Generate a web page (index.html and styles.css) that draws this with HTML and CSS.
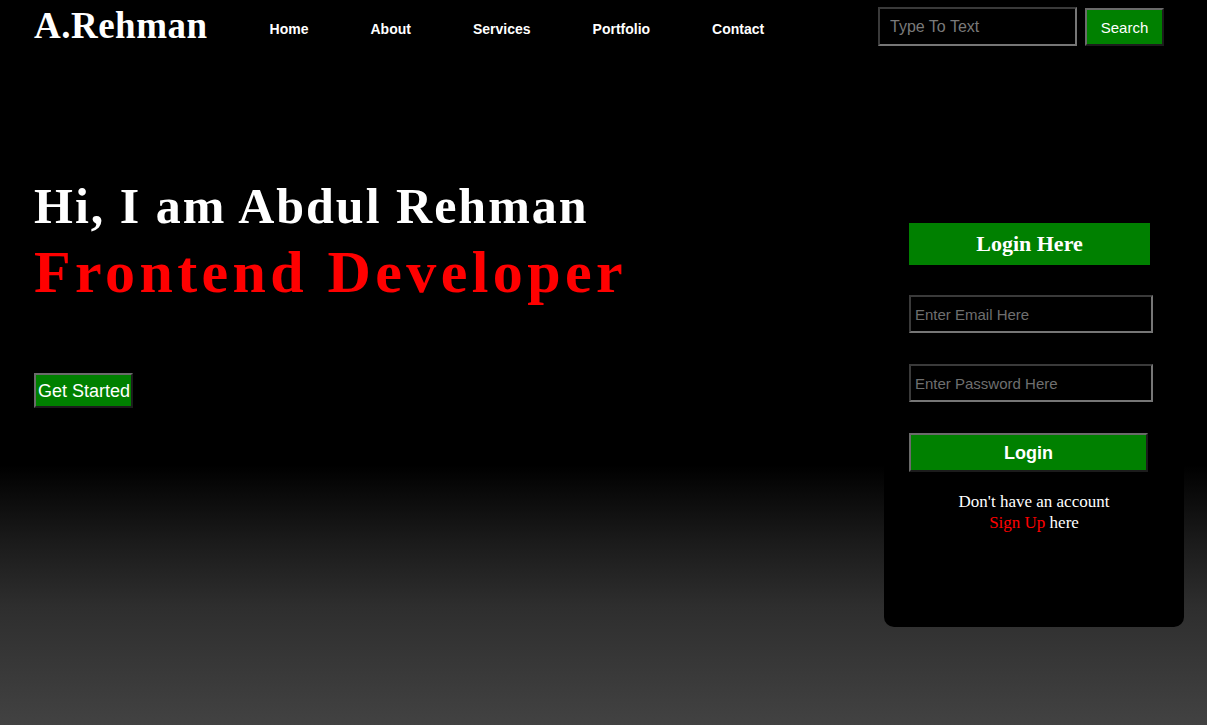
FILE: index.html
```html
<!DOCTYPE html>
<html lang="en">
<head>
<meta charset="utf-8">
<title>A.Rehman</title>
<link rel="stylesheet" href="styles.css">
</head>
<body>
<header class="topbar">
  <div class="logo">A.Rehman</div>
  <ul class="menu">
    <li><a href="#">Home</a></li>
    <li><a href="#">About</a></li>
    <li><a href="#">Services</a></li>
    <li><a href="#">Portfolio</a></li>
    <li><a href="#">Contact</a></li>
  </ul>
  <form class="search">
    <input class="search-input" type="text" placeholder="Type To Text">
    <button class="search-btn" type="button">Search</button>
  </form>
</header>
<main class="main">
  <section class="hero">
    <h1 class="hero-title">Hi, I am Abdul Rehman</h1>
    <h2 class="hero-sub">Frontend Developer</h2>
    <button class="start-btn" type="button">Get Started</button>
  </section>
  <aside class="card">
    <div class="card-title">Login Here</div>
    <input class="field field-email" type="email" placeholder="Enter Email Here">
    <input class="field field-pass" type="password" placeholder="Enter Password Here">
    <button class="login-btn" type="button">Login</button>
    <p class="signup">Don't have an account<br><a href="#" class="signup-link">Sign Up</a> here</p>
  </aside>
</main>
</body>
</html>
```
FILE: styles.css
```css
* { box-sizing: border-box; }

html, body { margin: 0; padding: 0; }

body {
  min-height: 725px;
  background: linear-gradient(to bottom, #000 0px, #000 465px, #1a1a1a 540px, #2e2e2e 607px, #424242 725px);
  background-color: #000;
  font-family: "Liberation Serif", "Times New Roman", serif;
  color: #fff;
  overflow: hidden;
}

.topbar {
  display: flex;
  align-items: center;
  height: 53px;
  padding: 0 43px 0 34px;
}

.logo {
  font-family: "Liberation Serif", "Times New Roman", serif;
  font-weight: bold;
  font-size: 37px;
  letter-spacing: 0.5px;
  color: #fff;
  line-height: 1;
  margin-top: -2px;
}

.menu {
  display: flex;
  gap: 62px;
  list-style: none;
  margin: 5px 0 0 62px;
  padding: 0;
}

.menu a {
  font-family: "Liberation Sans", Arial, sans-serif;
  font-weight: bold;
  font-size: 14px;
  color: #fff;
  text-decoration: none;
}

.search {
  margin-left: auto;
  display: flex;
  align-items: flex-start;
  gap: 8px;
}

.search-input {
  width: 199px;
  height: 39px;
  background: #000;
  border: 2px solid;
  border-color: #3a3a3a #767676 #767676 #3a3a3a;
  padding: 0 10px;
  font-family: "Liberation Sans", Arial, sans-serif;
  font-size: 16px;
  color: #fff;
  outline: none;
}

.search-input::placeholder { color: #7a7a7a; opacity: 1; }

.search-btn {
  margin-top: 1px;
  width: 79px;
  height: 38px;
  background: #008000;
  color: #fff;
  border: 2px solid;
  border-color: #6a6a6a #1c1c1c #1c1c1c #6a6a6a;
  font-family: "Liberation Sans", Arial, sans-serif;
  font-size: 15px;
  padding: 0;
}

.field::placeholder { color: #6f6f6f; opacity: 1; }

.main {
  display: flex;
  justify-content: space-between;
  align-items: flex-start;
  padding: 0 23px 0 34px;
}

.hero { padding-top: 128px; }

.hero-title {
  margin: 0;
  font-family: "Liberation Serif", "Times New Roman", serif;
  font-weight: bold;
  font-size: 50px;
  line-height: 50px;
  letter-spacing: 2px;
  color: #fff;
}

.hero-sub {
  margin: 11px 0 0;
  font-family: "Liberation Serif", "Times New Roman", serif;
  font-weight: bold;
  font-size: 60px;
  line-height: 60px;
  letter-spacing: 4.4px;
  color: #ff0000;
}

.start-btn {
  display: block;
  margin-top: 71px;
  width: 99px;
  height: 35px;
  padding: 0 0 0 1px;
  background: #008000;
  color: #fff;
  border: 2px solid;
  border-color: #6a6a6a #1c1c1c #1c1c1c #6a6a6a;
  font-family: "Liberation Sans", Arial, sans-serif;
  font-size: 18px;
  line-height: 33px;
}

.card {
  margin-top: 145px;
  width: 300px;
  height: 429px;
  background: #000;
  border-radius: 10px;
  padding: 25px 25px;
  display: flex;
  flex-direction: column;
  align-items: flex-start;
}

.card-title {
  width: 241px;
  height: 42px;
  line-height: 42px;
  background: #008000;
  color: #fff;
  text-align: center;
  font-family: "Liberation Serif", "Times New Roman", serif;
  font-weight: bold;
  font-size: 22px;
}

.field {
  width: 244px;
  height: 38px;
  background: #000;
  border: 2px solid;
  border-color: #3a3a3a #767676 #767676 #3a3a3a;
  padding: 0 4px;
  font-family: "Liberation Sans", Arial, sans-serif;
  font-size: 15px;
  color: #fff;
  outline: none;
}

.field-email { margin-top: 30px; }
.field-pass { margin-top: 31px; }

.login-btn {
  margin-top: 31px;
  width: 239px;
  height: 39px;
  padding: 2px 0 0;
  background: #008000;
  color: #fff;
  border: 2px solid;
  border-color: #6a6a6a #1c1c1c #1c1c1c #6a6a6a;
  font-family: "Liberation Sans", Arial, sans-serif;
  font-weight: bold;
  font-size: 18px;
}

.signup {
  width: 250px;
  margin: 19px 0 0;
  text-align: center;
  font-family: "Liberation Serif", "Times New Roman", serif;
  font-size: 17px;
  line-height: 21px;
  color: #fff;
}

.signup-link {
  color: #ff0000;
  text-decoration: none;
}
```
